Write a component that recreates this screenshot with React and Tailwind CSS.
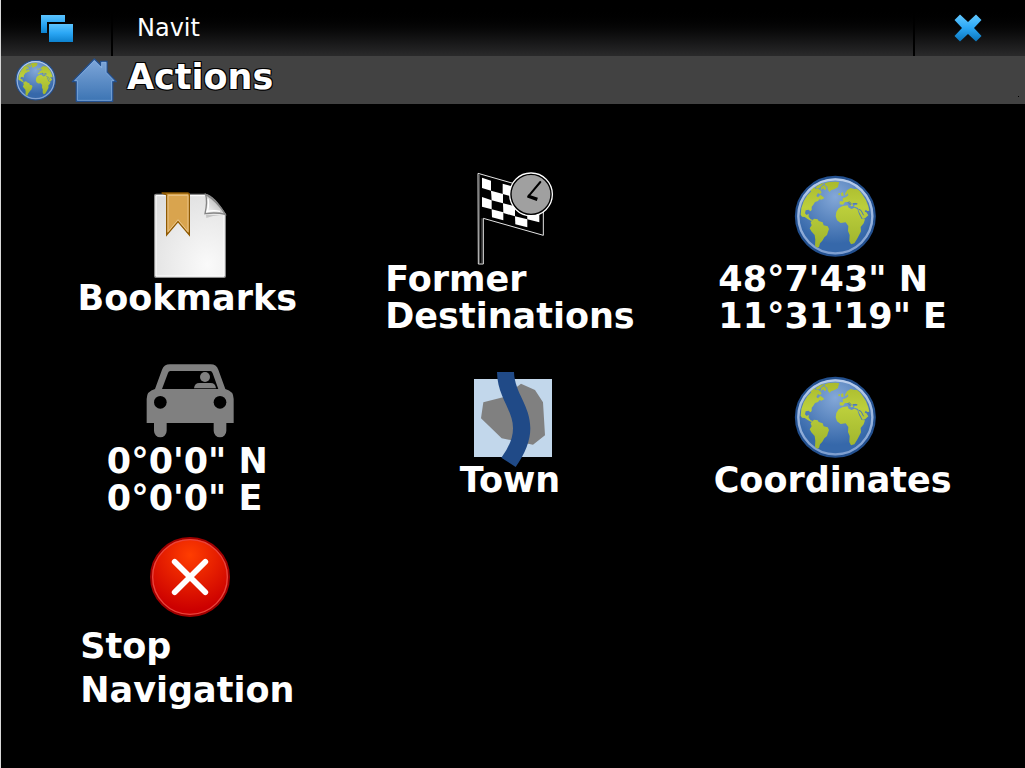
import React, { useId } from 'react';

function GlobeIcon({ className }) {
  const id = useId();
  return (
    <svg viewBox="8 -6 288 288" className={className} aria-hidden="true">
      <defs>
        <radialGradient id={`${id}sea`} cx="0.5" cy="0.25" r="0.6">
          <stop offset="0" stopColor="#84a8d8" />
          <stop offset="1" stopColor="#3668aa" />
        </radialGradient>
        <linearGradient id={`${id}land`} x1="0" y1="30" x2="0" y2="235" gradientUnits="userSpaceOnUse">
          <stop offset="0" stopColor="#a9b92c" />
          <stop offset="0.4" stopColor="#bccf3c" />
          <stop offset="1" stopColor="#9eb32c" />
        </linearGradient>
        <linearGradient id={`${id}rim`} x1="0" y1="0" x2="0" y2="1">
          <stop offset="0" stopColor="#b9cdeb" />
          <stop offset="1" stopColor="#7f9fd0" />
        </linearGradient>
      </defs>
      <circle cx="150" cy="139" r="118" fill={`url(#${id}sea)`} stroke="#23508f" strokeWidth="7" />
      <circle cx="150" cy="139" r="111" fill="none" stroke={`url(#${id}rim)`} strokeWidth="7" />
      <g fill={`url(#${id}land)`}>
        <path d="M46 134 L48 114 L55 94 L66 76 L80 62 L88 57 L98 56 L105 61 L109 67 L104 73 L98 69 L93 78 L98 82 L105 74 L111 79 L117 84 L108 89 L103 87 L98 93 L89 96 L84 104 L79 110 L79 120 L75 124 L70 119 L61 121 L59 130 L64 135 L70 131 L70 140 L76 148 L83 150 L78 153 L68 148 L58 141 L50 140 Z" />
        <path d="M75 62 L86 52 L92 58 L80 66 Z M91 51 L105 42 L118 38 L108 47 L102 54 L94 56 Z M108 50 L116 45 L124 54 L119 61 L113 55 L106 61 Z" />
        <path d="M118 40 L130 36 L151 35 L162 37 L159 45 L158 51 L148 57 L137 61 L133 66 L128 60 L126 50 L119 46 Z" />
        <path d="M76 157 L86 146 L97 148 L100 153 L112 157 L115 166 L127 169 L131 177 L128 185 L125 195 L117 202 L111 212 L104 220 L101 231 L95 233 L89 227 L90 209 L88 195 L78 184 L73 175 L79 166 Z" />
        <path d="M160 115 L172 108 L187 106 L190 113 L199 117 L207 113 L216 117 L221 132 L229 147 L239 148 L235 160 L226 171 L227 184 L221 196 L215 207 L207 220 L197 223 L192 213 L193 195 L188 183 L189 168 L181 157 L166 159 L155 151 L151 139 L153 126 Z" />
        <path d="M163 103 L163 94 L173 94 L172 85 L181 82 L189 76 L187 70 L181 77 L179 71 L185 61 L196 54 L207 57 L214 56 L223 63 L232 75 L242 91 L249 109 L252 122 L246 123 L241 119 L238 125 L243 127 L249 136 L239 145 L232 147 L220 123 L218 114 L204 109 L210 104 L216 105 L211 98 L202 101 L203 108 L197 109 L193 99 L187 96 L179 96 L173 104 Z" />
        <path d="M167 70 L173 66 L175 77 L168 78 Z M160 69 L165 70 L163 76 L159 75 Z" />
      </g>
      <path d="M187 96 L196 105 M191 94 L199 103 M202 101 L216 101 M220 118 L227 121 L235 136" fill="none" stroke="#4b78b7" strokeWidth="3" />
    </svg>
  );
}

function HomeIcon() {
  return (
    <svg viewBox="210 18 144 144" className="size-12" aria-hidden="true">
      <defs>
        <linearGradient id="home-fill" x1="0" y1="0" x2="0" y2="1">
          <stop offset="0" stopColor="#7fa7da" />
          <stop offset="1" stopColor="#3c74b3" />
        </linearGradient>
      </defs>
      <path d="M283 27 L302 46 V34 H321 V66 L349 95 H338 V154 H229 V95 H217 Z" fill="url(#home-fill)" stroke="#23508f" strokeWidth="4" strokeLinejoin="round" />
      <path d="M283 32 L305 54 V37 H318 V67 L342 92 H335 V151 H232 V92 H224 Z" fill="none" stroke="#8db4e4" strokeWidth="2" />
    </svg>
  );
}

function WindowsIcon() {
  return (
    <svg viewBox="0 0 34 28" className="h-7 w-[34px]" aria-hidden="true">
      <defs>
        <linearGradient id="win-fill" x1="0" y1="0" x2="0" y2="1">
          <stop offset="0" stopColor="#5cc4ff" />
          <stop offset="0.5" stopColor="#2ba7f5" />
          <stop offset="1" stopColor="#0d82cf" />
        </linearGradient>
      </defs>
      <path d="M1 1 H25 V8 H7 V19 H1 Z" fill="url(#win-fill)" />
      <rect x="9" y="10" width="24" height="18" fill="url(#win-fill)" />
    </svg>
  );
}

function CloseIcon() {
  return (
    <svg viewBox="0 0 28 28" className="size-7" aria-hidden="true">
      <defs>
        <linearGradient id="close-fill" x1="0" y1="0" x2="0" y2="1">
          <stop offset="0" stopColor="#62c8ff" />
          <stop offset="0.5" stopColor="#2ba7f5" />
          <stop offset="1" stopColor="#0a74ba" />
        </linearGradient>
      </defs>
      <path d="M6 0.5 L14 8 L22 0.5 L27.5 6 L20 14 L27.5 22 L22 27.5 L14 20 L6 27.5 L0.5 22 L8 14 L0.5 6 Z" fill="url(#close-fill)" />
    </svg>
  );
}

function BookmarkIcon({ className }) {
  return (
    <svg viewBox="6 21 288 288" className={className} aria-hidden="true">
      <defs>
        <radialGradient id="page-fill" cx="0.75" cy="0.85" r="1">
          <stop offset="0" stopColor="#fafafa" />
          <stop offset="1" stopColor="#dedede" />
        </radialGradient>
        <linearGradient id="page-curl" x1="0" y1="1" x2="0.7" y2="0.3">
          <stop offset="0" stopColor="#ffffff" />
          <stop offset="1" stopColor="#b9b9b9" />
        </linearGradient>
      </defs>
      <path d="M48 43 H196 Q222 47 256 103 V288 Q256 292 252 292 H48 Q44 292 44 288 V47 Q44 43 48 43 Z" fill="url(#page-fill)" stroke="#8a8a8a" strokeWidth="4" />
      <path d="M48 47 H194 M48 47 V288 H252 V106" fill="none" stroke="#ffffff" strokeWidth="3" />
      <path d="M198 104 L250 106 Q222 104 199 114 Z" fill="#c4c4c4" />
      <path d="M197 43 Q203 65 195 101 Q228 96 256 103 Q232 64 197 43 Z" fill="url(#page-curl)" stroke="#858585" strokeWidth="4" />
      <path d="M204 56 Q208 72 202 94 Q222 90 240 94" fill="none" stroke="#ffffff" strokeWidth="4" />
      <path d="M65 39 H143 Q148 39 148 45 V165 L114 125 L80 165 V45 Z" fill="#d9a44e" stroke="#8f5902" strokeWidth="4" />
      <path d="M84 46 H144 V155 L114 119 L84 155 Z" fill="none" stroke="#e8c48a" strokeWidth="3" />
    </svg>
  );
}

function FlagClockIcon({ className }) {
  return (
    <svg viewBox="0 9 288 288" className={`${className} overflow-visible`} aria-hidden="true">
      <path d="M39 25 L235 81 V211 L55 160 V297 H40 Z" fill="#000000" stroke="#e4e4e4" strokeWidth="3" />
      <path d="M43 30 V295 M51 160 V295" fill="none" stroke="#8b8b8b" strokeWidth="2" />
      <g fill="#ffffff">
        <path d="M51 38 L78 47 V77 L51 69 Z" />
        <path d="M113 56 L148 66 V96 L113 87 Z" />
        <path d="M78 77 L114 87 V115 L80 106 Z" />
        <path d="M51 96 L80 106 V133 L51 125 Z" />
        <path d="M114 115 L150 124 V154 L115 144 Z" />
        <path d="M80 133 L115 142 V166 L81 157 Z" />
        <path d="M150 154 L187 163 V187 L151 178 Z" />
        <path d="M186 138 L223 146 V172 L187 163 Z" />
      </g>
      <circle cx="198" cy="88" r="64" fill="#a0a0a0" stroke="#ffffff" strokeWidth="4" />
      <circle cx="198" cy="88" r="60" fill="none" stroke="#000000" strokeWidth="4" />
      <path d="M226 51 L190 94" fill="none" stroke="#000000" strokeWidth="6" strokeLinecap="round" />
      <path d="M188 93 L217 103" fill="none" stroke="#000000" strokeWidth="10" />
    </svg>
  );
}

function CarIcon({ className }) {
  return (
    <svg viewBox="6 -15 288 288" className={className} aria-hidden="true">
      <path d="M90 28 H212 Q229 28 235 44 L256 102 Q281 108 281 132 V204 H259 V227 A19 20 0 0 1 221 227 V204 H80 V227 A19 20 0 0 1 42 227 V204 H20 V132 Q20 108 45 102 L66 44 Q72 28 90 28 Z" fill="#808080" />
      <path d="M91 48 H211 Q215 48 218 55 L235 102 H66 L84 54 Q86 48 91 48 Z" fill="#000000" />
      <circle cx="195" cy="66" r="15" fill="#808080" />
      <path d="M162 100 Q164 84 178 84 H212 Q226 84 228 100 Z" fill="#808080" />
      <circle cx="61" cy="142" r="19" fill="#000000" />
      <circle cx="240" cy="142" r="19" fill="#000000" />
    </svg>
  );
}

function TownIcon({ className }) {
  return (
    <svg viewBox="0 10 288 288" className={`${className} overflow-visible`} aria-hidden="true">
      <rect x="27" y="40" width="234" height="234" fill="#c2d7eb" />
      <path d="M55 110 L117 94 L168 54 L210 73 L234 110 L240 209 L204 237 L110 218 L48 158 Z" fill="#808080" />
      <path d="M96 19 H147 C149 83 196 119 196 188 Q196 242 152 304 L109 276 Q144 230 144 188 C144 132 97 94 96 19 Z" fill="#204a87" />
    </svg>
  );
}

function StopIcon({ className }) {
  return (
    <svg viewBox="6 6 288 288" className={className} aria-hidden="true">
      <defs>
        <radialGradient id="stop-fill" cx="0.5" cy="0.22" r="0.7">
          <stop offset="0" stopColor="#ff3d00" />
          <stop offset="1" stopColor="#cc0000" />
        </radialGradient>
      </defs>
      <circle cx="150" cy="141" r="117" fill="url(#stop-fill)" stroke="#a00000" strokeWidth="6" />
      <circle cx="150" cy="141" r="112" fill="none" stroke="#e8443c" strokeWidth="4" />
      <path d="M104 95 L196 187 M196 95 L104 187" fill="none" stroke="#ffffff" strokeWidth="17" strokeLinecap="round" />
    </svg>
  );
}

const actions = [
  { icon: BookmarkIcon, lines: ['Bookmarks'] },
  { icon: FlagClockIcon, lines: ['Former', 'Destinations'] },
  { icon: GlobeIcon, lines: ['48°7\'43" N', '11°31\'19" E'] },
  { icon: CarIcon, lines: ['0°0\'0" N', '0°0\'0" E'] },
  { icon: TownIcon, lines: ['Town'] },
  { icon: GlobeIcon, lines: ['Coordinates'] },
  { icon: StopIcon, lines: ['Stop', 'Navigation'], spacing: 'leading-[44px]' },
];

function ActionButton({ icon: Icon, lines, spacing = 'pt-px leading-[37px]' }) {
  return (
    <button type="button" className="flex flex-col items-center justify-center">
      <Icon className="-mb-1 size-24" />
      <span className={`pr-1.5 text-left text-[35px] font-bold ${spacing}`}>
        {lines.map((line) => (
          <span key={line} className="block whitespace-nowrap">{line}</span>
        ))}
      </span>
    </button>
  );
}

export default function App() {
  return (
    <div className="min-h-screen border-l border-[#d8d8d8] bg-black font-['DejaVu_Sans',sans-serif] text-white">
      {/* Window title bar */}
      <header className="flex h-14 items-stretch bg-linear-to-b from-black from-10% to-[#2a2a2b]">
        <button type="button" aria-label="Switch window" className="flex w-28 items-center justify-center border-r-2 border-black pl-0.5">
          <WindowsIcon />
        </button>
        <div className="flex flex-1 items-center pl-6 text-2xl">Navit</div>
        <button type="button" aria-label="Close" className="flex w-28 items-center justify-center border-l-2 border-black pr-1">
          <CloseIcon />
        </button>
      </header>

      {/* Menu path */}
      <nav className="flex h-12 items-center bg-[#424242] pl-[11px]">
        <button type="button" aria-label="Map">
          <GlobeIcon className="size-12" />
        </button>
        <button type="button" aria-label="Main menu" className="ml-2.5">
          <HomeIcon />
        </button>
        <h1 className="flex-1 pb-1.5 pl-[9px] text-[35px] leading-[42px] font-bold [text-shadow:1px_1px_0_#000,-1px_-1px_0_#000,1px_-1px_0_#000,-1px_1px_0_#000]">
          Actions
        </h1>
        <span className="mt-8 mr-1.5 size-px bg-black" />
      </nav>

      <main className="grid grid-cols-3 gap-y-[15px] px-7 pt-16 pb-14">
        {actions.map((action) => (
          <ActionButton key={action.lines.join(' ')} {...action} />
        ))}
      </main>
    </div>
  );
}
